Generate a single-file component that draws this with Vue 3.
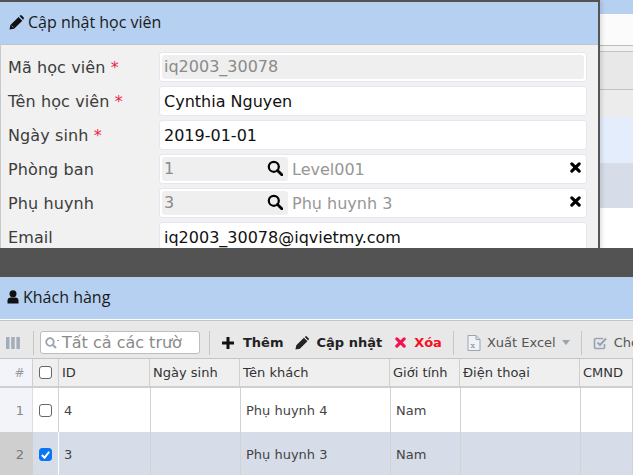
<script setup>
const fields = [
  { label: 'Mã học viên', req: true, value: 'iq2003_30078', disabled: true },
  { label: 'Tên học viên', req: true, value: 'Cynthia Nguyen' },
  { label: 'Ngày sinh', req: true, value: '2019-01-01' },
  { label: 'Phòng ban', code: '1', name: 'Level001' },
  { label: 'Phụ huynh', code: '3', name: 'Phụ huynh 3' },
  { label: 'Email', value: 'iq2003_30078@iqvietmy.com' }
]
const heads = ['ID', 'Ngày sinh', 'Tên khách', 'Giới tính', 'Điện thoại', 'CMND']
const rows = [
  { n: 1, id: '4', name: 'Phụ huynh 4', g: 'Nam', sel: false },
  { n: 2, id: '3', name: 'Phụ huynh 3', g: 'Nam', sel: true }
]
</script>

<template>
  <div class="page">
    <section class="upper">
      <div class="back">
        <div class="b1"></div><div class="b2"></div><div class="b3"></div><div class="b4"></div>
        <div class="b5"></div><div class="b6"></div><div class="b7"></div>
      </div>
      <div class="modal">
        <header class="m-head">
          <svg class="pen" viewBox="0 0 16 16" width="15" height="15"><path d="M0.500 15.500l1-4.800L10.200 2l4 4-8.700 8.700z M11.200 1l.6-.5a1.200 1.200 0 0 1 1.700 0l2 2a1.200 1.200 0 0 1 0 1.700l-.5.800z" fill="#111"/><path d="M2.800 11.300l2 2" stroke="#b5d0f0" stroke-width=".7"/></svg>
          <span>Cập nhật học viên</span>
        </header>
        <div class="form">
          <div v-for="f in fields" :key="f.label" class="row">
            <label class="lbl">{{ f.label }}<span v-if="f.req" class="req"> *</span></label>
            <div v-if="f.code" class="box pick">
              <span class="code">{{ f.code }}
                <svg class="mag" viewBox="0 0 16 16" width="16" height="16"><circle cx="6.800" cy="6.800" r="5" fill="none" stroke="#000" stroke-width="2.200"/><path d="M10.500 10.500l4.300 4.300" stroke="#000" stroke-width="2.800" stroke-linecap="round"/></svg>
              </span>
              <span class="name">{{ f.name }}</span>
              <svg class="del" viewBox="0 0 12 12" width="11" height="11"><path d="M2 2l8 8M10 2l-8 8" stroke="#000" stroke-width="3.400" stroke-linecap="round"/></svg>
            </div>
            <div v-else class="box" :class="{ dis: f.disabled }"><span>{{ f.value }}</span></div>
          </div>
        </div>
      </div>
    </section>

    <div class="gap"></div>

    <section class="lower">
      <header class="l-head">
        <svg viewBox="0 0 12 14" width="12" height="14"><circle cx="6" cy="3.800" r="3.500" fill="#111"/><path d="M.5 13.500V10.500C.5 8.500 2 7.500 3.500 7.500h5c1.500 0 3 1 3 3v3z" fill="#111"/></svg>
        <span>Khách hàng</span>
      </header>
      <div class="toolbar">
        <svg class="grip" viewBox="0 0 14 12" width="14" height="12"><path d="M0 0h3.500v12H0zM5.200 0h3.500v12H5.200zM10.400 0h3.500v12h-3.500z" fill="#a3adb9"/></svg>
        <i class="sep first"></i>
        <div class="search">
          <svg viewBox="0 0 14 12" width="14" height="12"><circle cx="5" cy="5" r="3.800" fill="none" stroke="#9aa4b2" stroke-width="1.800"/><path d="M8 8l3 3" stroke="#9aa4b2" stroke-width="2"/><path d="M12 3.500h2" stroke="#9aa4b2"/></svg>
          <span>Tất cả các trườ</span>
        </div>
        <i class="sep s2"></i>
        <button class="tool t-add">
          <svg viewBox="0 0 12 12" width="12" height="12"><path d="M4.500 0h3v4.500H12v3H7.500V12h-3V7.500H0v-3h4.500z" fill="#111"/></svg>
          <b>Thêm</b>
        </button>
        <button class="tool t-edit">
          <svg viewBox="0 0 16 16" width="14" height="14"><path d="M0.500 15.500l1-4.800L10.200 2l4 4-8.700 8.700z M11.200 1l.6-.5a1.200 1.200 0 0 1 1.700 0l2 2a1.200 1.200 0 0 1 0 1.700l-.5.800z" fill="#222"/></svg>
          <b>Cập nhật</b>
        </button>
        <button class="tool t-del">
          <svg viewBox="0 0 12 12" width="11" height="11"><path d="M2 2l8 8M10 2l-8 8" stroke="#f6104f" stroke-width="3.400" stroke-linecap="round"/></svg>
          <b>Xóa</b>
        </button>
        <i class="sep s3"></i>
        <button class="tool t-xls">
          <svg viewBox="0 0 14 16" width="14" height="16"><path d="M1 .5h8l4 4v11H1z M9 .5v4h4" fill="#f0f2f5" stroke="#9aa5b3"/><text x="3.500" y="13" font-size="8" font-family="DejaVu Serif, serif" fill="#7d8896">x</text></svg>
          <span>Xuất Excel</span>
          <i class="caret"></i>
        </button>
        <i class="sep s4"></i>
        <button class="tool t-chk">
          <svg viewBox="0 0 15 14" width="15" height="14"><path d="M11.500 8v3a1.500 1.500 0 0 1-1.500 1.500H3A1.500 1.500 0 0 1 1.500 11V4A1.500 1.500 0 0 1 3 2.500h7" fill="none" stroke="#9aa5b3" stroke-width="1.700"/><path d="M4.500 6.500l2.500 2.500 6-6.500" fill="none" stroke="#9aa5b3" stroke-width="2.200"/></svg>
          <span>Chọn</span>
        </button>
      </div>

      <div class="grid ghead">
        <div class="c num">#</div>
        <div class="c chk"><i class="cb"></i></div>
        <div v-for="h in heads" :key="h" class="c">{{ h }}</div>
      </div>
      <div v-for="r in rows" :key="r.n" class="grid grow" :class="{ sel: r.sel }">
        <div class="c num">{{ r.n }}</div>
        <div class="c chk">
          <i class="cb" :class="{ on: r.sel }">
            <svg v-if="r.sel" viewBox="0 0 12 12" width="11" height="11"><path d="M2 6.500l3 3 5-6.500" fill="none" stroke="#fff" stroke-width="2.200"/></svg>
          </i>
        </div>
        <div class="c idc">{{ r.id }}</div>
        <div class="c"></div>
        <div class="c namec">{{ r.name }}</div>
        <div class="c namec">{{ r.g }}</div>
        <div class="c"></div>
        <div class="c"></div>
      </div>
    </section>
  </div>
</template>

<style scoped>
.page {
  width: 633px;
  height: 475px;
  overflow: hidden;
  display: flex;
  flex-direction: column;
  font-family: "DejaVu Sans", sans-serif;
  background: #fff;
}
svg { flex: none; }
.upper { position: relative; height: 248px; overflow: hidden; background: #fff; flex: none; }
.back { display: flex; flex-direction: column; }
.b1 { height: 14px; background: #b5d0f0; }
.b2 { height: 31px; background: #fbfbfb; border-bottom: 1px solid #bdbdbd; }
.b3 { height: 5px; background: #f2f2f2; }
.b4 { background: #e8e8e8; border-top: 1px solid #c2c2c2; border-bottom: 1px solid #c2c2c2; height: 37px; }
.b5 { height: 27px; background: #ececec; }
.b6 { height: 46px; background: #e3edfb; }
.b7 { height: 45px; background: #d6dde8; }

.modal {
  position: absolute;
  left: 0; top: 0;
  width: 598px;
  height: 248px;
  border-top: 2px solid #535353;
  border-right: 2px solid #555;
  background: #f1f1f1;
  box-shadow: 2px 0 4px rgba(0,0,0,.12);
}
.m-head {
  height: 42px;
  padding: 0 0 2px 9px;
  box-sizing: border-box;
  background: #b5d0f0;
  border-bottom: 0;
  display: flex;
  align-items: center;
  gap: 4px;
  font-family: "Open Sans", sans-serif;
  font-size: 16px;
  color: #1a1a1a;
  box-shadow: 0 1px 0 #c4c4c4;
}
.form {
  padding: 8px 11px 0 1px;
  border-left: 1px solid #c9c9c9;
  display: flex;
  flex-direction: column;
  gap: 4px;
}
.row { display: flex; height: 30px; align-items: center; flex: none; }
.lbl { width: 150px; padding: 1px 0 0 6px; flex: none; font-size: 16px; color: #3c3c3c; box-sizing: border-box; margin-right: 7px; letter-spacing: .1px; }
.req { color: #f21f4a; }
.box {
  flex: 1;
  height: 30px;
  box-sizing: border-box;
  background: #fff;
  border: 1px solid #e6e6f2;
  border-radius: 3px;
  padding: 2px;
  font-size: 16px;
  color: #111;
  display: flex;
  align-items: center;
}
.box > span:only-child { padding-left: 2px; }
.dis { color: #8a8a8a; }
.dis > span { background: #efefef; flex: 1; height: 24px; line-height: 24px; border-radius: 3px; }
.pick { gap: 4px; }
.code {
  width: 126px;
  height: 24px;
  background: #efefef;
  border-radius: 3px;
  color: #8a8a8a;
  padding: 0 5px 0 2px;
  box-sizing: border-box;
  line-height: 24px;
  display: flex;
  align-items: center;
  justify-content: space-between;
}
.mag { margin-top: -3px; }
.name { flex: 1; color: #969696; }
.del { margin-right: 3px; margin-top: -3px; }

.gap { height: 29px; background: #535353; flex: none; }
.lower { flex: 1; min-height: 0; }
.l-head {
  height: 43px;
  box-sizing: border-box;
  padding: 0 0 2px 7px;
  background: #b5d0f0;
  display: flex;
  align-items: center;
  gap: 4px;
  font-family: "Open Sans", sans-serif;
  font-size: 16px;
  color: #1a1a1a;
  border-bottom: 1px solid #fff;
}
.toolbar {
  height: 39px;
  box-sizing: border-box;
  padding: 6px 0 0 6px;
  background: #e8e8e8;
  border-top: 1px solid #c4c4c4;
  border-bottom: 1px solid #c4c4c4;
  display: flex;
  align-items: center;
  color: #555;
  font-size: 13px;
  white-space: nowrap;
  overflow: hidden;
}
.sep { width: 1px; height: 24px; background: #c6c6c6; flex: none; }
.first { margin-left: 13px; margin-right: 6px; }
.search {
  width: 160px;
  height: 23px;
  box-sizing: border-box;
  flex: none;
  border: 1px solid #bdbdbd;
  border-radius: 3px;
  background: #fff;
  display: flex;
  align-items: center;
  gap: 3px;
  padding-left: 4px;
  font-size: 16px;
  color: #8a8a8a;
  overflow: hidden;
}
.s2 { margin-left: 9px; margin-right: 12px; }
.s3 { margin-left: 11px; margin-right: 13px; }
.s4 { margin-left: 11px; margin-right: 12px; }
.tool {
  border: 0;
  background: none;
  padding: 0;
  font: inherit;
  color: inherit;
  display: flex;
  align-items: center;
  flex: none;
}
.tool b { color: #222; }
.t-add { gap: 9px; margin-right: 11px; }
.t-edit { gap: 8px; margin-right: 13px; }
.t-del { gap: 8px; }
.t-del b { color: #f5101f; }
.t-xls { gap: 6px; }
.caret { width: 0; height: 0; border: 4px solid transparent; border-top: 5px solid #9aa5b3; border-bottom: 0; }
.t-chk { gap: 6px; margin-left: -1px; }

.grid {
  display: grid;
  font-size: 13px;
}
.ghead {
  grid-template-columns: 33px 26px 91px 90px 150px 70px 120px 53px;
  height: 27px;
  background: #efefef;
  border-bottom: 2px solid #cfcfcf;
  color: #333;
}
.ghead .c { border-right: 1px solid #cfcfcf; display: flex; align-items: center; padding-left: 3px; box-sizing: border-box; }
.ghead .num { color: #999; justify-content: center; padding-left: 7px; font-size: 12px; background: #f2f4f9; }
.ghead .chk { justify-content: center; padding-left: 0; }
.grow {
  height: 44px;
  background: #fff;
  color: #444;
  grid-template-columns: 33px 26px 92px 90px 150px 70px 120px 52px;
}
.grow .c { border-right: 1px solid #d2d2d2; display: flex; align-items: center; box-sizing: border-box; }
.grow .num { background: #f2f4f9; justify-content: flex-end; padding-right: 8px; color: #888; border-right: 1px solid #ddd; }
.grow .chk { justify-content: center; }
.idc { padding-left: 5px; }
.namec { padding-left: 5px; }
.sel { background: #d6dde8; }
.sel .chk { border-right-color: #fff !important; }
.sel .num { background: #cfcfcf; color: #777; border-right-color: #cfcfcf; }
.cb {
  width: 13px;
  height: 13px;
  box-sizing: border-box;
  border: 1px solid #666;
  border-radius: 3px;
  background: #fff;
  display: flex;
  align-items: center;
  justify-content: center;
}
.cb.on { background: #0a76f6; border-color: #0a76f6; }
</style>
